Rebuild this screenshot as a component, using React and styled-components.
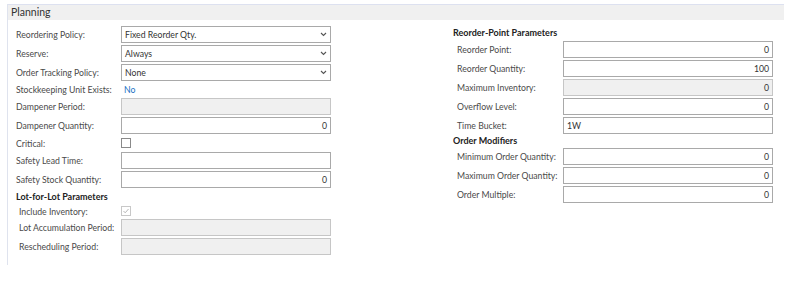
import React from 'react';
import styled, { createGlobalStyle } from 'styled-components';

const GlobalStyle = createGlobalStyle`
  body {
    margin: 0;
    background: #ffffff;
    font-family: "Segoe UI", Lato, "Open Sans", sans-serif;
  }
`;

const Panel = styled.section`
  margin: 4px 0 0 7px;
  width: 776px;
  border-left: 1px solid #dfe3ee;
  padding-bottom: 10px;
`;

const PanelHeader = styled.div`
  height: 16px;
  background: #f0f0f0;
  border-top: 1px solid #dde1f0;
  box-sizing: border-box;
  padding-left: 3px;
  font-size: 10.5px;
  line-height: 15px;
  color: #333;
`;

const Columns = styled.div`
  display: flex;
  padding: 6px 0 0 8px;
`;

const Column = styled.div`
  display: flex;
  flex-direction: column;
  gap: 2px;
  width: ${(p) => p.$width}px;
  margin-left: ${(p) => p.$offset || 0}px;
`;

const Row = styled.div`
  display: grid;
  grid-template-columns: ${(p) => p.$labelWidth}px 210px;
  align-items: center;
  height: ${(p) => p.$height || 17}px;
`;

const Label = styled.span`
  font-size: 8.7px;
  color: #4a4a4a;
  padding-left: ${(p) => p.$indent || 0}px;
  white-space: nowrap;
`;

const GroupTitle = styled.div`
  font-size: 9px;
  font-weight: 700;
  color: #222;
  height: ${(p) => p.$height || 13}px;
  line-height: ${(p) => p.$height || 13}px;
`;

const Box = styled.div`
  height: 17px;
  box-sizing: border-box;
  border: 1px solid ${(p) => (p.$disabled ? '#c6c6c6' : '#a9a9a9')};
  background: ${(p) => (p.$disabled ? '#f0f0f0' : '#fff')};
  display: flex;
  align-items: center;
  justify-content: ${(p) => (p.$right ? 'flex-end' : 'space-between')};
  padding: 0 3px;
  font-size: 8.7px;
  color: #333;
`;

const LinkValue = styled.span`
  font-size: 8.7px;
  color: #1a6fc4;
  padding-left: 3px;
`;

const Check = styled.span`
  width: 10px;
  height: 10px;
  box-sizing: border-box;
  border: 1px solid ${(p) => (p.$disabled ? '#c8c8c8' : '#8a8a8a')};
  background: #fff;
  display: flex;
  align-items: center;
  justify-content: center;
`;

const Chevron = () => (
  <svg width="7" height="5" viewBox="0 0 7 5">
    <polyline points="1,1 3.5,3.5 6,1" fill="none" stroke="#555" strokeWidth="1.1" />
  </svg>
);

const Tick = () => (
  <svg width="8" height="8" viewBox="0 0 8 8">
    <polyline points="1.5,4 3.2,5.8 6.5,2" fill="none" stroke="#b8b8b8" strokeWidth="1" />
  </svg>
);

const Select = ({ value }) => (
  <Box>
    <span>{value}</span>
    <Chevron />
  </Box>
);

const Field = ({ label, labelWidth, indent, height, children }) => (
  <Row $labelWidth={labelWidth} $height={height}>
    <Label $indent={indent}>{label}</Label>
    {children}
  </Row>
);

const L = 105;
const R = 110;

const App = () => (
  <>
    <GlobalStyle />
    <Panel>
      <PanelHeader>Planning</PanelHeader>
      <Columns>
        <Column $width={315}>
          <Field label="Reordering Policy:" labelWidth={L}>
            <Select value="Fixed Reorder Qty." />
          </Field>
          <Field label="Reserve:" labelWidth={L}>
            <Select value="Always" />
          </Field>
          <Field label="Order Tracking Policy:" labelWidth={L}>
            <Select value="None" />
          </Field>
          <Field label="Stockkeeping Unit Exists:" labelWidth={L} height={13}>
            <LinkValue>No</LinkValue>
          </Field>
          <Field label="Dampener Period:" labelWidth={L}>
            <Box $disabled />
          </Field>
          <Field label="Dampener Quantity:" labelWidth={L}>
            <Box $right>0</Box>
          </Field>
          <Field label="Critical:" labelWidth={L} height={14}>
            <Check />
          </Field>
          <Field label="Safety Lead Time:" labelWidth={L}>
            <Box />
          </Field>
          <Field label="Safety Stock Quantity:" labelWidth={L}>
            <Box $right>0</Box>
          </Field>
          <GroupTitle>Lot-for-Lot Parameters</GroupTitle>
          <Field label="Include Inventory:" labelWidth={L} indent={3} height={12}>
            <Check $disabled>
              <Tick />
            </Check>
          </Field>
          <Field label="Lot Accumulation Period:" labelWidth={L} indent={3}>
            <Box $disabled />
          </Field>
          <Field label="Rescheduling Period:" labelWidth={L} indent={3}>
            <Box $disabled />
          </Field>
        </Column>

        <Column $width={320} $offset={122}>
          <GroupTitle>Reorder-Point Parameters</GroupTitle>
          <Field label="Reorder Point:" labelWidth={R} indent={4}>
            <Box $right>0</Box>
          </Field>
          <Field label="Reorder Quantity:" labelWidth={R} indent={4}>
            <Box $right>100</Box>
          </Field>
          <Field label="Maximum Inventory:" labelWidth={R} indent={4}>
            <Box $disabled $right>0</Box>
          </Field>
          <Field label="Overflow Level:" labelWidth={R} indent={4}>
            <Box $right>0</Box>
          </Field>
          <Field label="Time Bucket:" labelWidth={R} indent={4}>
            <Box>1W</Box>
          </Field>
          <GroupTitle $height={10}>Order Modifiers</GroupTitle>
          <Field label="Minimum Order Quantity:" labelWidth={R} indent={4}>
            <Box $right>0</Box>
          </Field>
          <Field label="Maximum Order Quantity:" labelWidth={R} indent={4}>
            <Box $right>0</Box>
          </Field>
          <Field label="Order Multiple:" labelWidth={R} indent={4}>
            <Box $right>0</Box>
          </Field>
        </Column>
      </Columns>
    </Panel>
  </>
);

export default App;
